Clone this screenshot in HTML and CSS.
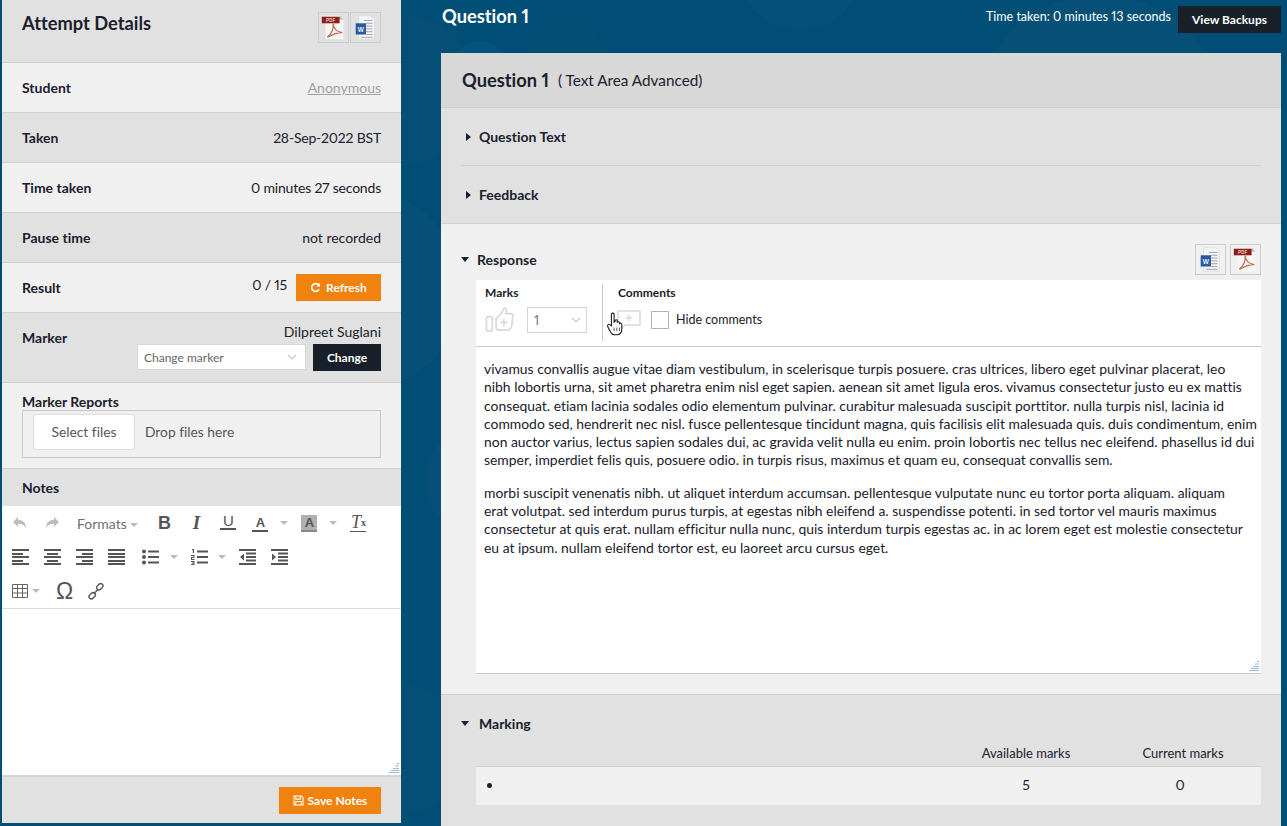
FILE: index.html
```html
<!DOCTYPE html>
<html lang="en">
  <head>
    <meta charset="UTF-8" />
    <title>Attempt Details</title>
    <link rel="stylesheet" href="styles.css">
  </head>
  <body>
    <svg width="0" height="0" class="defs">
      <symbol id="pdf" viewBox="0 0 31 31">
        <path d="M7 3h15l4 4v21H7z" fill="#f7f5f5"/>
        <path d="M22 3l4 4h-4z" fill="#b4b4b4"/>
        <rect x="3" y="4" width="19" height="7" fill="#8c1d18"/>
        <path d="M15 11.500c1.500 5-2 11-6 14.500 3-1 8-5.500 16-5-5-.5-9-4-10-9.500z" fill="none" stroke="#b5714f" stroke-width="1.300"/>
      </symbol>
      <symbol id="word" viewBox="0 0 31 31">
        <path d="M8 3h13l4 4v21H8z" fill="#f4f4f6" stroke="#dedede"/>
        <path d="M14 8h9M16 11h7M16 14h7M16 17h7M16 20h7M16 23h7M11 26h12" stroke="#9aa0ad"/>
        <rect x="5" y="11" width="11" height="12" fill="#2a5a9e"/>
      </symbol>
      <symbol id="chev" viewBox="0 0 10 6">
        <path d="M1 1l4 4 4-4" fill="none" stroke="#c8c8c8" stroke-width="1.200"/>
      </symbol>
      <symbol id="grip" viewBox="0 0 10 10">
        <path d="M8 0h2v1H8zM6 2.500h4v1H6zM4 5h6v1H4zM2 7h8v1H2zM0 9h10v1H0z" fill="#9bb9cf"/>
      </symbol>
    </svg>

    <aside class="side">
      <div class="side-head">
        <h2>Attempt Details</h2>
        <div class="icon-pair">
          <a class="doc-btn"><svg viewBox="0 0 31 31"><use href="#pdf"/><text x="12.500" y="9.800" class="pdf-label">PDF</text></svg></a>
          <a class="doc-btn"><svg viewBox="0 0 31 31"><use href="#word"/><text x="10.500" y="20" class="word-label">W</text></svg></a>
        </div>
      </div>
      <div class="row light">
        <b>Student</b>
        <a class="anon">Anonymous</a>
      </div>
      <div class="row dark">
        <b>Taken</b>
        <span class="tight">28-Sep-2022 BST</span>
      </div>
      <div class="row light">
        <b>Time taken</b>
        <span class="tight">0 minutes 27 seconds</span>
      </div>
      <div class="row dark">
        <b>Pause time</b>
        <span>not recorded</span>
      </div>
      <div class="row light">
        <b>Result</b>
        <div class="result-val">
          <span class="score tight">0 / 15</span>
          <button class="btn orange refresh">
            <svg viewBox="0 0 12 12" width="11" height="11"><path d="M9.800 3.600A4.300 4.300 0 1 0 10 8" fill="none" stroke="#fff" stroke-width="1.900"/><path d="M11 0.800V5H6.800z" fill="#fff"/></svg>
            Refresh
          </button>
        </div>
      </div>
      <div class="row dark marker">
        <b>Marker</b>
        <div class="marker-val">
          <span>Dilpreet Suglani</span>
          <div class="marker-form">
            <div class="fake-select">Change marker <svg width="10" height="6"><use href="#chev"/></svg></div>
            <button class="btn navy change">Change</button>
          </div>
        </div>
      </div>
      <div class="reports light">
        <b>Marker Reports</b>
        <div class="dropzone">
          <span class="select-files">Select files</span>
          <span class="drop-hint">Drop files here</span>
        </div>
      </div>
      <div class="notes-head dark"><b>Notes</b></div>
      <div class="toolbar">
        <div class="tool-row">
          <i class="t"><svg viewBox="0 0 16 16" width="16" height="16"><path d="M6 2v3c5 0 8 2 8 9-1-4-3-5-8-5v3L1 7z" fill="#bdbdbd"/></svg></i>
          <i class="t"><svg viewBox="0 0 16 16" width="16" height="16"><path d="M10 2v3C5 5 2 7 2 14c1-4 3-5 8-5v3l5-5z" fill="#bdbdbd"/></svg></i>
          <span class="formats">Formats <em class="caret"></em></span>
          <i class="t glyph bold">B</i>
          <i class="t glyph ital">I</i>
          <i class="t glyph under">U</i>
          <i class="t glyph under-a">A</i><em class="caret pale"></em>
          <i class="t glyph under-a back">A</i><em class="caret pale"></em>
          <i class="t glyph clear">T<sub>x</sub></i>
        </div>
        <div class="tool-row second">
          <i class="t"><span class="lines left"><u></u><u></u><u></u><u></u><u></u></span></i>
          <i class="t"><span class="lines center"><u></u><u></u><u></u><u></u><u></u></span></i>
          <i class="t"><span class="lines right"><u></u><u></u><u></u><u></u><u></u></span></i>
          <i class="t"><span class="lines full"><u></u><u></u><u></u><u></u><u></u></span></i>
          <i class="t bul"><svg viewBox="0 0 17 16" width="17" height="16"><g fill="#555"><circle cx="2" cy="2.500" r="2"/><circle cx="2" cy="8" r="2"/><circle cx="2" cy="13.500" r="2"/><path d="M6 1.500h11v2H6zM6 7h11v2H6zM6 12.500h11v2H6z"/></g></svg></i><em class="caret pale"></em>
          <i class="t num"><svg viewBox="0 0 17 16" width="17" height="16"><g fill="#555"><path d="M6 1.500h11v2H6zM6 7h11v2H6zM6 12.500h11v2H6zM1 0h2v4H1.800V1H1zM0 6h3.500v3H1v1h2.500v1H0V8h2.500V7H0zM0 12h3.500v4H0v-1h2.500v-.5H1v-1h1.500V13H0z"/></g></svg></i><em class="caret pale"></em>
          <i class="t"><svg viewBox="0 0 17 16" width="17" height="16"><path d="M0 0h17v2H0zM7 3.500h10v2H7zM7 7h10v2H7zM7 10.500h10v2H7zM0 14h17v2H0zM5 4.500v7L1 8z" fill="#555"/></svg></i>
          <i class="t"><svg viewBox="0 0 17 16" width="17" height="16"><path d="M0 0h17v2H0zM7 3.500h10v2H7zM7 7h10v2H7zM7 10.500h10v2H7zM0 14h17v2H0zM1 4.500v7L5 8z" fill="#555"/></svg></i>
        </div>
        <div class="tool-row third">
          <i class="t table"><svg viewBox="0 0 16 14" width="16" height="14"><path d="M.500.500h15v13H.500zM.500 4.500h15M.500 9h15M5.500.500v13M10.500.500v13" fill="none" stroke="#666"/></svg><em class="caret"></em></i>
          <i class="t glyph omega">Ω</i>
          <i class="t"><svg viewBox="0 0 16 16" width="17" height="17" fill="none" stroke="#555" stroke-width="1.400"><rect x="8.300" y="1" width="7" height="4.600" rx="2.300" transform="rotate(-45 11.800 3.300)"/><rect x=".700" y="10" width="7" height="4.600" rx="2.300" transform="rotate(-45 4.200 12.300)"/><path d="M5.800 10.200l4.400-4.400"/></svg></i>
        </div>
      </div>
      <div class="note-area">
        <svg class="grip" width="10" height="10"><use href="#grip"/></svg>
      </div>
      <div class="side-foot">
        <button class="btn orange save">
          <svg viewBox="0 0 12 12" width="11" height="11"><path d="M1 1h8l2 2v8H1z M3 1.500v3h5v-3 M3 11V7h6v4" fill="none" stroke="#fff" stroke-width="1.100"/></svg>
          Save Notes
        </button>
      </div>
    </aside>

    <main class="main">
      <div class="main-top">
        <h1>Question 1</h1>
        <div class="time-wrap">
          <span>Time taken: 0 minutes 13 seconds</span>
          <button class="btn navy backups">View Backups</button>
        </div>
      </div>
      <section class="panel">
        <div class="q-head">
          <h2>Question 1</h2>
          <span>( Text Area Advanced)</span>
        </div>
        <div class="q-meta dark">
          <div class="collapsed first"><em class="tri-right"></em><b>Question Text</b></div>
          <div class="collapsed"><em class="tri-right"></em><b>Feedback</b></div>
        </div>
        <div class="response light">
          <div class="resp-head">
            <div class="resp-title"><em class="tri-down"></em><b>Response</b></div>
            <div class="icon-pair wide">
              <a class="doc-btn"><svg viewBox="0 0 31 31"><use href="#word"/><text x="10.500" y="20" class="word-label">W</text></svg></a>
              <a class="doc-btn"><svg viewBox="0 0 31 31"><use href="#pdf"/><text x="12.500" y="9.800" class="pdf-label">PDF</text></svg></a>
            </div>
          </div>
          <div class="answer">
            <div class="grade-bar">
              <div class="grade-marks">
                <label>Marks</label>
                <div class="grade-line">
                  <svg viewBox="0 0 30 28" width="30" height="27" fill="none" stroke="#d9d9d9" stroke-width="1.800"><rect x="1" y="11" width="6" height="15" rx="1.500"/><path d="M11 13l6-6c1-2 1-4 3-5 2 0 2 3 1 6h6c2 0 2 2 1 4 0 8-1 12-4 13H14c-2 0-3-1-3-3z"/><path d="M15 17h8M19 13v8"/></svg>
                  <div class="mark-select">1 <svg width="10" height="6"><use href="#chev"/></svg></div>
                </div>
              </div>
              <div class="grade-comments">
                <label>Comments</label>
                <div class="grade-line">
                  <svg class="add-comment" viewBox="0 0 24 20" width="24" height="20" fill="none" stroke="#d9d9d9" stroke-width="1.500"><path d="M1 1h22v14H8l-4 4v-4H1z"/><path d="M12 4.500v7M8.500 8h7"/></svg>
                  <span class="check"></span>
                  <span class="hide-label">Hide comments</span>
                </div>
                <svg class="cursor" viewBox="0 0 20 26" width="18" height="24"><path d="M6 2c1-1.500 3-1.500 3 .5V11l1-.5V9c1-1 2.500-1 2.500.5v1.500c1-1 2.500-.5 2.500 1v.5c1-.8 2.500-.5 2.500 1V19c0 3-2 6-5 6H9c-2 0-3-1-4-3l-3-6c-1-2 1-3.500 2.500-2L6 15z" fill="#fff" stroke="#1b1b1b" stroke-width="1.200"/><path d="M9 17v4M12 17v4M15 17v4" stroke="#1b1b1b" stroke-width=".8"/></svg>
              </div>
            </div>
            <div class="answer-text">
              <p>vivamus convallis augue vitae diam vestibulum, in scelerisque turpis posuere. cras ultrices, libero eget pulvinar placerat, leo<br>nibh lobortis urna, sit amet pharetra enim nisl eget sapien. aenean sit amet ligula eros. vivamus consectetur justo eu ex mattis consequat. etiam lacinia sodales odio elementum pulvinar. curabitur malesuada suscipit porttitor. nulla turpis nisl, lacinia id commodo sed, hendrerit nec nisl. fusce pellentesque tincidunt magna, quis facilisis elit malesuada quis. duis condimentum, enim non auctor varius, lectus sapien sodales dui, ac gravida velit nulla eu enim. proin lobortis nec tellus nec eleifend. phasellus id dui semper, imperdiet felis quis, posuere odio. in turpis risus, maximus et quam eu, consequat convallis sem.</p>
              <p>morbi suscipit venenatis nibh. ut aliquet interdum accumsan. pellentesque vulputate nunc eu tortor porta aliquam. aliquam<br>erat volutpat. sed interdum purus turpis, at egestas nibh eleifend a. suspendisse potenti. in sed tortor vel mauris maximus consectetur at quis erat. nullam efficitur nulla nunc, quis interdum turpis egestas ac. in ac lorem eget est molestie consectetur eu at ipsum. nullam eleifend tortor est, eu laoreet arcu cursus eget.</p>
              <svg class="grip" width="10" height="10"><use href="#grip"/></svg>
            </div>
          </div>
        </div>
        <div class="marking dark">
          <div class="resp-title"><em class="tri-down"></em><b>Marking</b></div>
          <div class="mark-cols">
            <span class="col-a">Available marks</span>
            <span class="col-b">Current marks</span>
          </div>
          <div class="mark-row">
            <span class="bullet"></span>
            <span class="col-a">5</span>
            <span class="col-b">0</span>
          </div>
        </div>
      </section>
    </main>
  </body>
</html>
```

FILE: styles.css
```css
* {
  box-sizing: border-box;
}
html,
body {
  margin: 0;
  height: 826px;
  overflow: hidden;
}
body {
  display: flex;
  align-items: flex-start;
  font-family: Lato, "Open Sans", sans-serif;
  font-size: 14px;
  font-variant-ligatures: none;
  font-variant-numeric: proportional-nums;
  color: #1a202c;
  background-color: #004e75;
  background-image:
    radial-gradient(circle at 480px 70px, #02547a 0 28px, transparent 29px),
    radial-gradient(circle at 565px 60px, #024f76 0 38px, transparent 39px),
    radial-gradient(circle at 800px -30px, #05507a 0 60px, transparent 61px),
    radial-gradient(circle at 1100px 120px, #064f77 0 125px, transparent 126px),
    radial-gradient(circle at 400px 90px, #054f77 0 75px, transparent 76px),
    radial-gradient(circle at 360px 290px, #064f77 0 100px, transparent 101px),
    radial-gradient(circle at 480px 480px, #064f77 0 55px, transparent 56px),
    radial-gradient(circle at 400px 750px, #034f76 0 65px, transparent 66px);
}
.defs {
  position: absolute;
}
.pdf-label {
  font-family: "Liberation Sans", sans-serif;
  font-size: 5px;
  font-weight: 700;
  fill: #e6c8c0;
  text-anchor: middle;
}
.word-label {
  font-family: "Liberation Sans", sans-serif;
  font-size: 7px;
  font-weight: 700;
  fill: #e8eef8;
  text-anchor: middle;
}
h1,
h2,
p {
  margin: 0;
}
em,
i {
  font-style: normal;
}
b {
  font-weight: 700;
  font-size: 14px;
}
.light {
  background-color: #f0f0f0;
}
.dark {
  background-color: #e1e1e1;
}
.tight {
  letter-spacing: -0.2px;
}

/* left panel */
.side {
  width: 399px;
  height: 823px;
  margin-left: 2px;
  display: flex;
  flex-direction: column;
  flex-shrink: 0;
}
.side-head {
  height: 63px;
  padding: 11px 20px 0;
  display: flex;
  justify-content: space-between;
  background-color: #e1e1e1;
  border-bottom: 1px solid #cfcfcf;
}
.side-head h2 {
  font-size: 18.300px;
  font-weight: 700;
  line-height: 24px;
}
.icon-pair {
  display: flex;
  gap: 1px;
  margin-top: 1px;
}
.icon-pair.wide {
  gap: 4px;
  margin-top: 0;
}
.doc-btn {
  width: 31px;
  height: 31px;
  border: 1px solid #ccc;
  display: block;
}
.doc-btn svg {
  width: 29px;
  height: 29px;
  display: block;
}
.row {
  height: 50px;
  padding: 0 20px;
  display: flex;
  justify-content: space-between;
  align-items: center;
  border-bottom: 1px solid #cfcfcf;
}
.anon {
  color: #9da39d;
  text-decoration: underline;
}
.result-val {
  display: flex;
  align-items: flex-start;
  gap: 9px;
}
.score {
  line-height: 22px;
}
.btn {
  border: none;
  font-family: inherit;
  font-weight: 700;
  font-size: 12px;
  color: #fff;
  padding: 0;
}
.orange {
  background-color: #f0820f;
}
.navy {
  background-color: #192029;
}
.refresh {
  width: 85px;
  height: 27px;
}
.refresh svg {
  vertical-align: -1px;
  margin-right: 2px;
}
.marker {
  height: 70px;
  align-items: flex-start;
}
.marker > b {
  margin-top: 16px;
}
.marker-val {
  margin-top: 10px;
  display: flex;
  flex-direction: column;
  align-items: flex-end;
  gap: 4px;
}
.marker-form {
  display: flex;
  gap: 7px;
}
.fake-select {
  width: 169px;
  height: 26px;
  background-color: #fff;
  border: 1px solid #d6d6d6;
  padding: 0 8px 0 6px;
  font-size: 12px;
  color: #666;
  display: flex;
  justify-content: space-between;
  align-items: center;
}
.change {
  width: 68px;
  height: 27px;
}
.reports {
  height: 86px;
  padding: 10px 20px 0;
  border-bottom: 1px solid #cfcfcf;
}
.reports b {
  display: block;
  line-height: 17px;
}
.dropzone {
  height: 48px;
  border: 1px solid #c8c8c8;
  padding: 3px 10px;
  display: flex;
  align-items: flex-start;
  gap: 10px;
  font-size: 13.800px;
  color: #555;
}
.select-files {
  width: 102px;
  height: 36px;
  line-height: 34px;
  text-align: center;
  background-color: #fff;
  border: 1px solid #ddd;
  border-radius: 3px;
}
.drop-hint {
  line-height: 36px;
}
.notes-head {
  height: 37px;
  padding: 0 20px;
  display: flex;
  align-items: center;
}

/* editor toolbar */
.toolbar {
  height: 103px;
  background-color: #fff;
  border-bottom: 1px solid #dcdcdc;
}
.tool-row {
  height: 34px;
  padding-left: 10px;
  display: flex;
  align-items: center;
}
.t {
  width: 16px;
  height: 18px;
  margin-right: 16px;
  display: flex;
  align-items: center;
  justify-content: center;
  color: #555;
  flex-shrink: 0;
}
.formats {
  font-size: 14px;
  color: #6f6f6f;
  margin: 0 18px 0 1px;
  white-space: nowrap;
}
.caret {
  display: inline-block;
  width: 0;
  height: 0;
  border-left: 4px solid transparent;
  border-right: 4px solid transparent;
  border-top: 4px solid #bbb;
  vertical-align: 2px;
}
.caret.pale {
  margin-right: 13px;
  flex-shrink: 0;
}
.glyph {
  font-family: "Liberation Sans", sans-serif;
  font-size: 15px;
}
.bold {
  font-size: 18px;
  font-weight: 700;
}
.ital {
  font-family: "Liberation Serif", serif;
  font-size: 19px;
  font-style: italic;
  font-weight: 700;
}
.under {
  font-size: 15px;
  border-bottom: 2px solid #555;
  height: 15px;
  line-height: 12px;
  margin-bottom: 2px;
}
.under-a {
  font-weight: 700;
  font-size: 13px;
  border-bottom: 2px solid #555;
  width: 16px;
  height: 17px;
  margin-right: 12px;
}
.back {
  background-color: #b0b0b0;
  border-bottom-color: #888;
  margin-right: 12px;
}
.clear {
  font-family: "Liberation Serif", serif;
  font-style: italic;
  font-size: 18px;
  border-bottom: 1px solid #555;
  height: 17px;
}
.clear sub {
  font-style: normal;
  font-weight: 700;
  font-size: 10px;
  line-height: 0;
}
.second .t {
  margin-right: 15px;
  width: 17px;
}
.second .t.bul {
  margin-left: 2px;
  margin-right: 11px;
}
.second .t.num {
  margin-right: 10px;
}
.lines {
  display: flex;
  flex-direction: column;
  width: 17px;
  gap: 1.500px;
}
.lines u {
  display: block;
  width: 100%;
  height: 2px;
  background-color: #555;
}
.lines.left u:nth-child(even),
.lines.center u:nth-child(even),
.lines.right u:nth-child(even) {
  width: 11px;
}
.lines.center {
  align-items: center;
}
.lines.right {
  align-items: flex-end;
}
.table {
  width: 28px;
  gap: 4px;
  justify-content: flex-start;
}
.omega {
  font-size: 23px;
  width: 17px;
  margin-right: 15px;
}
.note-area {
  height: 168px;
  background-color: #fff;
  border-bottom: 2px solid #d4d4d4;
  position: relative;
}
.grip {
  position: absolute;
  right: 2px;
  bottom: 2px;
}
.side-foot {
  flex: 1;
  padding: 10px 20px 0;
  background-color: #e1e1e1;
  display: flex;
  justify-content: flex-end;
}
.save {
  width: 102px;
  height: 27px;
}
.save svg {
  vertical-align: -1px;
  margin-right: 1px;
}

/* right side */
.main {
  width: 840px;
  margin-left: 40px;
  flex-shrink: 0;
}
.main-top {
  height: 53px;
  padding-top: 5px;
  display: flex;
  justify-content: space-between;
  align-items: flex-start;
  color: #fff;
}
.main-top h1 {
  font-size: 18.300px;
  font-weight: 700;
  line-height: 22px;
  padding-left: 1px;
}
.time-wrap {
  display: flex;
  gap: 7px;
  font-size: 12.500px;
  padding-top: 1px;
  line-height: 22px;
}
.backups {
  width: 103px;
  height: 27px;
}
.q-head {
  height: 55px;
  padding: 0 21px;
  background-color: #d8d8d8;
  border-bottom: 1px solid #cfcfcf;
  display: flex;
  align-items: center;
  gap: 9px;
}
.q-head h2 {
  font-size: 18.300px;
  font-weight: 700;
}
.q-head span {
  font-size: 15.300px;
}
.q-meta {
  height: 116px;
  padding: 0 20px;
  border-bottom: 1px solid #cfcfcf;
}
.collapsed {
  height: 57px;
  padding-left: 5px;
  display: flex;
  align-items: center;
  gap: 8px;
}
.collapsed.first {
  height: 58px;
  border-bottom: 1px solid #cfcfcf;
}
.tri-right {
  width: 0;
  height: 0;
  border-top: 4px solid transparent;
  border-bottom: 4px solid transparent;
  border-left: 5px solid #1a202c;
}
.tri-down {
  width: 0;
  height: 0;
  border-left: 4.500px solid transparent;
  border-right: 4.500px solid transparent;
  border-top: 5px solid #1a202c;
}
.response {
  height: 471px;
  padding: 20px 20px 0 35px;
  border-bottom: 1px solid #cfcfcf;
}
.resp-head {
  height: 36px;
  display: flex;
  justify-content: space-between;
  position: relative;
}
.resp-title {
  display: flex;
  align-items: center;
  gap: 8px;
  margin-left: -15px;
  height: 31px;
}
.marking .resp-title {
  gap: 10px;
}
.answer {
  height: 394px;
  background-color: #fff;
  border-bottom: 1px solid #c8c8c8;
}
.grade-bar {
  height: 67px;
  padding-top: 4px;
  display: flex;
  border-bottom: 1px solid #c8c8c8;
}
.grade-bar label {
  font-size: 12px;
  font-weight: 700;
  display: block;
  line-height: 18px;
}
.grade-marks {
  width: 127px;
  height: 57px;
  padding-left: 9px;
  border-right: 1px solid #c8c8c8;
}
.grade-comments {
  padding-left: 15px;
  position: relative;
}
.grade-line {
  display: flex;
  align-items: center;
  gap: 12px;
  margin-top: 4px;
  height: 27px;
}
.mark-select {
  width: 60px;
  height: 26px;
  border: 1px solid #d6d6d6;
  padding: 0 5px 0 6px;
  font-size: 13px;
  color: #777;
  display: flex;
  justify-content: space-between;
  align-items: center;
}
.add-comment {
  margin-left: -1px;
}
.check {
  width: 18px;
  height: 18px;
  border: 1px solid #b9b4ac;
  margin-left: -2px;
  background-color: #fff;
}
.hide-label {
  margin-left: -5px;
  font-size: 12.500px;
}
.cursor {
  position: absolute;
  left: 3px;
  top: 28px;
}
.answer-text {
  height: 326px;
  padding: 13px 4px 0 8px;
  position: relative;
  font-size: 13.900px;
  line-height: 18.300px;
}
.answer-text p {
  margin-bottom: 14px;
}
.marking {
  height: 140px;
  padding: 13px 20px 0 35px;
}
.mark-cols {
  height: 28px;
  padding-right: 4px;
  display: flex;
  align-items: center;
  justify-content: flex-end;
  font-size: 13px;
  border-bottom: 1px solid #cfcfcf;
}
.mark-cols .col-b {
  padding-left: 6px;
}
.col-a {
  width: 154px;
  text-align: center;
}
.col-b {
  width: 154px;
  text-align: center;
}
.mark-row {
  height: 38px;
  padding: 0 4px 3px 0;
  background-color: #f0f0f0;
  display: flex;
  align-items: center;
  justify-content: flex-end;
  position: relative;
}
.bullet {
  position: absolute;
  left: 11px;
  top: 16px;
  width: 5px;
  height: 5px;
  background-color: #1a202c;
  border-radius: 50%;
}
```
